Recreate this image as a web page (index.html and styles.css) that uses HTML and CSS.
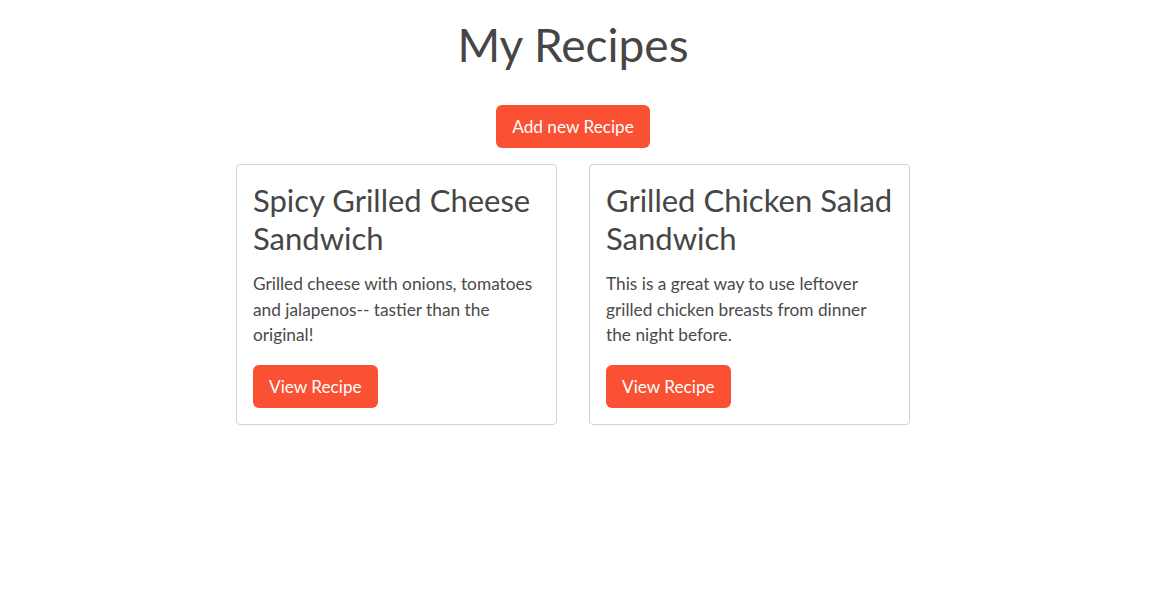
FILE: index.html
```html
<!DOCTYPE html>
<html lang="en">
<head>
<meta charset="utf-8">
<title>My Recipes</title>
<link rel="stylesheet" href="styles.css">
</head>
<body>
<main class="page">
  <h1 class="page-title">My Recipes</h1>
  <div class="actions">
    <a class="btn" href="#">Add new Recipe</a>
  </div>
  <div class="cards">
    <div class="card">
      <h2 class="card-title">Spicy Grilled Cheese Sandwich</h2>
      <p class="card-text">Grilled cheese with onions, tomatoes and jalapenos-- tastier than the original!</p>
      <a class="btn" href="#">View Recipe</a>
    </div>
    <div class="card">
      <h2 class="card-title">Grilled Chicken Salad Sandwich</h2>
      <p class="card-text">This is a great way to use leftover grilled chicken breasts from dinner the night before.</p>
      <a class="btn" href="#">View Recipe</a>
    </div>
  </div>
</main>
</body>
</html>
```
FILE: styles.css
```css
html, body {
  margin: 0;
  padding: 0;
  background: #fff;
}
body {
  font-family: "Lato", "Open Sans", sans-serif;
  color: #4a4a4a;
  font-size: 17px;
  line-height: 1.5;
}
.page {
  padding: 0 26px 0 0;
  display: flex;
  flex-direction: column;
  align-items: center;
}
.page-title {
  margin: 17px 0 0;
  font-size: 46px;
  font-weight: 400;
  line-height: 1.2;
  color: #464646;
}
.actions {
  margin-top: 33px;
}
.btn {
  display: block;
  background: #fa5033;
  color: #fff;
  text-decoration: none;
  font-size: 17.2px;
  line-height: 25px;
  padding: 9px 16px;
  border-radius: 6px;
}
.cards {
  margin-top: 16px;
  display: flex;
  gap: 32px;
}
.card {
  width: 321px;
  box-sizing: border-box;
  border: 1px solid #d3d3d3;
  border-radius: 4px;
  padding: 16px 16px 16px;
  display: flex;
  flex-direction: column;
  align-items: flex-start;
}
.card-title {
  margin: 0 0 14px;
  font-size: 31px;
  font-weight: 400;
  line-height: 38px;
  color: #464646;
}
.card-text {
  margin: 0 0 17px;
  font-size: 17.3px;
  line-height: 25.5px;
}
```
